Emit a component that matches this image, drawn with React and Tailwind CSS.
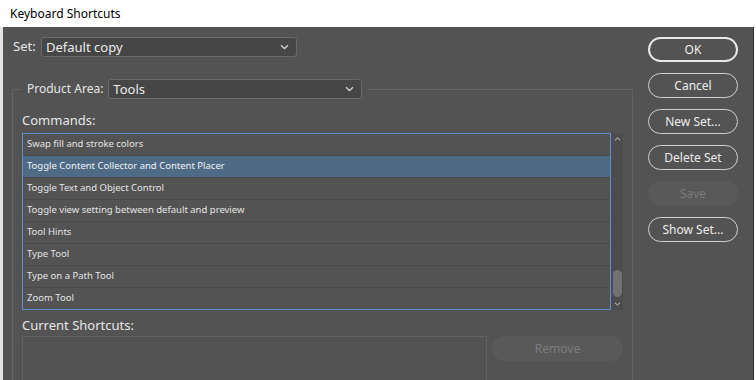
import React from 'react';

const commands = [
  'Swap fill and stroke colors',
  'Toggle Content Collector and Content Placer',
  'Toggle Text and Object Control',
  'Toggle view setting between default and preview',
  'Tool Hints',
  'Type Tool',
  'Type on a Path Tool',
  'Zoom Tool',
];

const buttons = [
  { label: 'OK', primary: true },
  { label: 'Cancel' },
  { label: 'New Set...' },
  { label: 'Delete Set' },
  { label: 'Save', disabled: true },
  { label: 'Show Set...' },
];

function Chevron({ className = '' }) {
  return (
    <svg width="9" height="6" viewBox="0 0 9 6" className={className}>
      <path d="M1 1.2 L4.5 4.5 L8 1.2" fill="none" stroke="#d4d4d4" strokeWidth="1.3" />
    </svg>
  );
}

function Select({ value, width }) {
  return (
    <div
      className={`flex h-[20px] items-center justify-between rounded-[3px] border border-[#6a6a6a] bg-[#464646] pl-[4px] pr-[7px] text-[13px] text-[#ececec] ${width}`}
    >
      <span className="leading-none">{value}</span>
      <Chevron />
    </div>
  );
}

export default function App() {
  return (
    <div
      className="flex h-[380px] w-[756px] flex-col overflow-hidden bg-white"
      style={{ fontFamily: '"Noto Sans", "Open Sans", sans-serif' }}
    >
      {/* title bar */}
      <div className="flex h-[27px] shrink-0 items-center pl-[10px] text-[12px] text-black">
        Keyboard Shortcuts
      </div>

      <div className="mr-[2px] flex min-h-0 flex-1 border-l-[3px] border-r border-l-[#e4e4e4] border-r-[#2e2e2e] bg-[#535353]">
        {/* left side */}
        <div className="w-[630px] shrink-0">
          <div className="flex items-center pl-[10px] pt-[10px]">
            <span className="w-[28px] text-[13px] text-[#e6e6e6]">Set:</span>
            <Select value="Default copy" width="w-[256px]" />
          </div>

          <fieldset className="ml-[9px] mt-[22px] h-[320px] border border-[#636363]">
            <legend className="ml-[9px] flex items-center px-[5px]">
              <span className="mr-[5px] text-[12px] text-[#e6e6e6]">Product Area:</span>
              <Select value="Tools" width="w-[254px]" />
            </legend>

            <div className="px-[9px]">
              <div className="mt-[12px] text-[13px] leading-[18px] text-[#e6e6e6]">Commands:</div>

              <div className="mt-[4px] flex h-[177px]">
                <div className="flex-1 overflow-hidden border border-[#5b8fce]">
                  {commands.map((c, i) => (
                    <div
                      key={c}
                      className={`flex h-[22px] items-center border-b border-[#4a4a4a] pl-[4px] text-[9.5px] ${
                        i === 1 ? 'bg-[#4e6a85] text-[#eef2f6]' : 'text-[#e4e4e4]'
                      } ${i === 0 ? 'h-[21px]' : ''}`}
                    >
                      {c}
                    </div>
                  ))}
                </div>
                <div className="flex w-[12px] flex-col items-center justify-between bg-[#4c4c4c] py-[3px]">
                  <Chevron className="rotate-180 scale-75" />
                  <div className="flex flex-col items-center gap-[4px]">
                    <div className="h-[27px] w-[9px] rounded-full bg-[#727272]" />
                    <Chevron className="scale-75" />
                  </div>
                </div>
              </div>

              <div className="mt-[6px] text-[13px] leading-[18px] text-[#e6e6e6]">Current Shortcuts:</div>

              <div className="mt-[2px] flex items-start gap-[5px]">
                <div className="h-[60px] w-[465px] border border-[#626262]" />
                <div className="flex h-[25px] w-[131px] items-center justify-center rounded-full bg-[#595959] text-[12px] text-[#7d7d7d]">
                  Remove
                </div>
              </div>
            </div>
          </fieldset>
        </div>

        {/* right buttons */}
        <div className="flex flex-col gap-[11px] pl-[15px] pt-[10px]">
          {buttons.map((b) => (
            <div
              key={b.label}
              className={`flex h-[25px] w-[90px] items-center justify-center rounded-full text-[12px] ${
                b.disabled
                  ? 'bg-[#595959] text-[#7a7a7a]'
                  : b.primary
                  ? 'border-2 border-[#e8e8e8] text-[#f0f0f0]'
                  : 'border border-[#cfcfcf] text-[#ececec]'
              }`}
            >
              {b.label}
            </div>
          ))}
        </div>
      </div>
    </div>
  );
}
